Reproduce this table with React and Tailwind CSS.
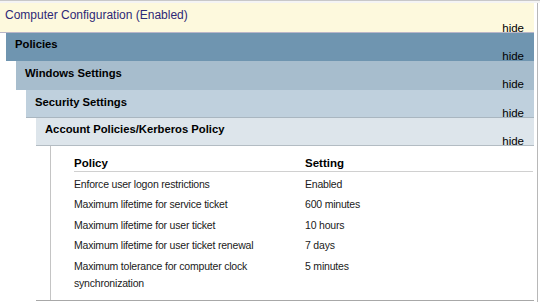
import React from 'react';

const rows = [
  { policy: 'Enforce user logon restrictions', setting: 'Enabled' },
  { policy: 'Maximum lifetime for service ticket', setting: '600 minutes' },
  { policy: 'Maximum lifetime for user ticket', setting: '10 hours' },
  { policy: 'Maximum lifetime for user ticket renewal', setting: '7 days' },
  { policy: 'Maximum tolerance for computer clock synchronization', setting: '5 minutes' },
];

function Bar({ title, bg, className = '', titleTop = 'top-[3px]', hideBottom = 'bottom-[-4px]' })
{
  return (
    <div className={`relative h-[28px] ${bg} ${className}`}>
      <div className={`absolute left-[9px] ${titleTop} text-[11.25px] font-bold text-black`}>{title}</div>
      <div className={`absolute right-[10px] ${hideBottom} text-[11.5px] leading-[16px] text-black`}>hide</div>
    </div>
  );
}

export default function App()
{
  return (
    <div className="w-[540px] h-[302px] overflow-hidden bg-white font-['Liberation_Sans',Arial,sans-serif]">
      <div className="h-[3px] bg-[#f4f4f4] border-t border-[#c8c8c8]" />
      <div className="mr-[2px] border-r border-[#b8b8b8]">
        <div className="relative h-[30px] bg-[#fdf9dd] border-b border-[#b9b6c8] mr-[3px]">
          <div className="absolute left-[5px] top-[3px] text-[12px] text-[#2d2877]">Computer Configuration (Enabled)</div>
          <div className="absolute right-[10px] bottom-[-4px] text-[11.5px] leading-[16px] text-black">hide</div>
        </div>
        <div className="pl-[6px] mr-[3px]">
          <Bar title="Policies" bg="bg-[#6f95b0]" hideBottom="bottom-[-3px]" />
          <div className="pl-[10px]">
            <Bar title="Windows Settings" bg="bg-[#a7bdcd]" className="h-[29px]" titleTop="top-[4px]" hideBottom="bottom-[-2px]" />
            <div className="pl-[10px]">
              <Bar title="Security Settings" bg="bg-[#bfd0dd]" className="border-b border-[#a9b6c0]" titleTop="top-[4px]" />
              <div className="pl-[10px]">
                <Bar title="Account Policies/Kerberos Policy" bg="bg-[#dde5eb]" className="border-b border-[#b3bcc3]" />
                <div className="pl-[14px]">
                  <div className="border-l border-[#c4c4c4] pl-[23px] pr-[1px] pt-[8px] h-[154px]">
                    <div className="flex border-b border-[#d0d0d0] text-[11.5px] font-bold text-black h-[18px] leading-[18px]">
                      <div className="w-[231px] shrink-0">Policy</div>
                      <div>Setting</div>
                    </div>
                    <div className="pt-[2px]">
                      {rows.map((r) => (
                        <div key={r.policy} className="flex text-[10.5px] tracking-[-0.2px] leading-[17px] py-[1.75px] text-[#1a1a1a]">
                          <div className="w-[231px] shrink-0 pr-[12px]">{r.policy}</div>
                          <div>{r.setting}</div>
                        </div>
                      ))}
                    </div>
                  </div>
                </div>
                <div className="border-t border-[#a8a8a8] h-[4px]" />
              </div>
            </div>
          </div>
        </div>
      </div>
    </div>
  );
}
